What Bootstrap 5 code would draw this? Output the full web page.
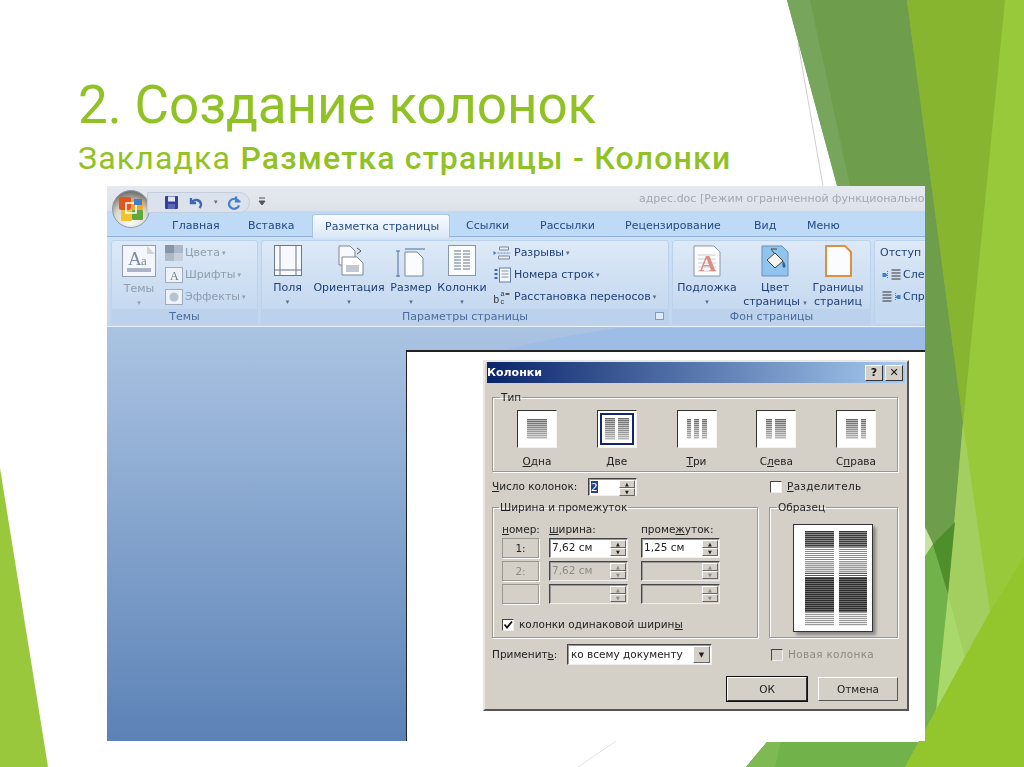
<!DOCTYPE html>
<html lang="ru">
  <head>
    <meta charset="UTF-8" />
    <title>2. Создание колонок</title>
    <link href="https://cdn.jsdelivr.net/npm/bootstrap@5.3.0/dist/css/bootstrap.min.css" rel="stylesheet" />
    <style>
      html, body { margin: 0; background: #fff; }
      .slide { position: relative; width: 1024px; height: 767px; overflow: hidden; background: #fff; }
      .slide-bg { position: absolute; left: 0; top: 0; }
      .slide-head { position: relative; padding: 71px 0 0 78px; color: #90c226; font-family: Roboto, sans-serif; }
      .slide-head h1 { margin: 0; font-size: 53px; line-height: 68px; font-weight: 400; letter-spacing: -.1px; }
      .slide-head p { margin: 0; font-size: 32px; line-height: 39px; letter-spacing: 1.2px; }
      .slide-head strong { font-weight: 500; }

      /* word window */
      .word { position: absolute; left: 107px; top: 186px; width: 818px; height: 555px; overflow: hidden; background: linear-gradient(#c6daf2, #5b82b6); font-family: "DejaVu Sans", sans-serif; font-size: 11px; color: #2a4a80; filter: blur(.35px); }
      .word-title { height: 25px; background: linear-gradient(#e6e9ee, #dde2ea); padding-left: 532px; line-height: 26px; white-space: nowrap; color: #a3a9b2; font-size: 11px; }
      .orb { position: absolute; left: 5px; top: 4px; }
      .qat { position: absolute; left: 40px; top: 6px; width: 103px; height: 21px; border-radius: 0 12px 12px 0; background: #dbe2ec; border: 1px solid #c3cedd; padding-left: 16px; gap: 9px; }
      .tabs { height: 26px; background: #bfdaf7; padding-left: 65px; border-bottom: 1px solid #8fb2dc; white-space: nowrap; }
      .tabs span { line-height: 29px; color: #234a86; position: absolute; }
      .tabs .on { top: 28px; height: 24px; left: 205px; width: 138px; line-height: 24px; padding-left: 12px; background: linear-gradient(#fafcff, #d9e7f7); border: 1px solid #a9c3e4; border-bottom: 0; border-radius: 3px 3px 0 0; z-index: 1; }
      .ribbon { height: 90px; background: linear-gradient(#d0e1f5, #c0d6ef); padding: 3px 0 0 4px; gap: 3px; border-bottom: 1px solid #e8f1fb; }
      .rgroup { height: 85px; flex: none; border-radius: 3px; background: linear-gradient(#dde9f7, #c5d9f0 80%); border: 1px solid #bcd1ea; position: relative; }
      .rgroup-body { height: 68px; padding-top: 4px; }
      .rgroup-foot { height: 16px; line-height: 16px; text-align: center; background: #bcd2ec; color: #4a6b9b; }
      .launcher { position: absolute; right: 4px; bottom: 4px; width: 9px; height: 8px; border: 1px solid #7f9cc4; background: #dfeafa; }
      .bigbtn { flex: none; text-align: center; line-height: 14px; color: #1f3f78; }
      .bigbtn svg { display: block; margin: 0 auto 3px; }
      .bigbtn .lbl { margin-top: 4px; }
      .arw { color: #5b6f8c; font-size: 7px; }
      .rrow { height: 22px; white-space: nowrap; color: #1f3f78; gap: 2px; }
      .rrows { margin-top: -3px; }
      .faded, .faded .arw { color: #8f9dae; }

      .swoosh { position: absolute; left: 0; top: 0; }
      .doc { position: absolute; left: 299px; top: 164px; width: 530px; height: 400px; background: #fff; border-left: 1px solid #222; border-top: 2px solid #222; }

      /* dialog */
      .dlg { position: absolute; left: 483px; top: 360px; width: 426px; height: 351px; background: #d4d0c8; border: 2px solid; border-color: #e8e6e0 #555 #555 #e8e6e0; font-family: "DejaVu Sans", sans-serif; font-size: 10.5px; color: #222; padding: 0 9px 0 7px; filter: blur(.3px); }
      .dlg-title { margin: 0 -7px 0 -5px; height: 21px; line-height: 21px; padding-left: 0; background: linear-gradient(90deg, #0a246a, #a6caf0); color: #fff; font-weight: 700; font-size: 11px; }
      .capbtn { width: 18px; height: 16px; background: #d4d0c8; border: 1px solid; border-color: #fff #333 #333 #fff; color: #111; font-weight: 700; line-height: 14px; text-align: center; font-size: 11px; margin-right: 2px; }
      .etched { border: 1px solid #9a978f; box-shadow: 1px 1px 0 #fff, inset 1px 1px 0 #fff; margin: 0; padding: 0; }
      .etched legend { float: none; width: auto; font-size: 10.5px; line-height: 12px; margin: 0 0 0 7px; padding: 0 1px; }
      .f-type { height: 81px; margin-top: 8px; }
      .thumbs { padding: 7px 21px 0 24px; justify-content: space-between; }
      .thumb-wrap { width: 40px; text-align: center; white-space: nowrap; }
      .thumb-wrap span { display: block; margin: 7px -15px 0; line-height: 13px; }
      .thumb { width: 40px; height: 38px; background: #fff; border: 1px solid; border-color: #333 #f4f4f4 #f4f4f4 #333; padding: 8px 9px; gap: 3px; }
      .thumb.sel { box-shadow: inset 0 0 0 2px #fff, inset 0 0 0 4px #14266b; padding: 7px 7px; }
      .tlines { flex: 1 1 0; background: repeating-linear-gradient(transparent 0 1px, rgba(255,255,255,.5) 1px 2px), linear-gradient(#666, #999 65%, #bbb); }
      .tlines.grow { flex: 2.2 1 0; }
      .spinbox { background: #fff; border: 1px solid; border-color: #444 #eee #eee #444; box-shadow: inset 1px 1px 0 #999; padding-left: 2px; line-height: 17px; white-space: nowrap; position: relative; }
      .spinbox.off { background: #d4d0c8; color: #8d8a83; }
      .spinbtns { position: absolute; right: 1px; top: 1px; bottom: 1px; width: 16px; gap: 0; }
      .spinbtns i { flex: 1; display: block; background: #d4d0c8; border: 1px solid; border-color: #fff #666 #666 #fff; color: #222; font-size: 5px; line-height: 6px; font-style: normal; text-align: center; }
      .off .spinbtns i { color: #8d8a83; }
      .chk { display: block; flex: none; width: 12px; height: 12px; background: #fff; border: 1px solid; border-color: #444 #eee #eee #444; }
      .chk.off { background: #d4d0c8; }
      .f-col { width: 266px; height: 137px; padding: 0 0 0 9px; }
      .f-smp { width: 129px; height: 137px; }
      .num { width: 37px; height: 20px; border: 1px solid #9a978f; box-shadow: 1px 1px 0 #fff; line-height: 18px; text-align: center; }
      .w-sp { width: 79px; height: 20px; }
      .w-gap { width: 79px; height: 20px; }
      .page { width: 80px; height: 108px; margin: 11px 0 0 23px; background: #fff; border: 1px solid #333; box-shadow: 3px 3px 3px #888; padding: 6px 5px 6px 11px; gap: 5px; }
      .plines { width: 30px; }
      .plines b { display: block; }
      .b-a { height: 16px; background: repeating-linear-gradient(#3a3a3a 0 1px, #8a8a8a 1px 2px); }
      .b-b { height: 14px; background: repeating-linear-gradient(#888 0 1px, #fff 1px 2px); }
      .b-f { height: 12px; background: repeating-linear-gradient(#999 0 1px, #d8d8d8 1px 2px); }
      .b-c { height: 5px; background: repeating-linear-gradient(#555 0 1px, #fff 1px 2px); }
      .b-d { height: 34px; background: repeating-linear-gradient(#2a2a2a 0 1px, #6e6e6e 1px 2px); }
      .b-e { height: 14px; background: repeating-linear-gradient(#999 0 1px, #eee 1px 2px); }
      .combo { width: 145px; height: 21px; background: #fff; border: 1px solid; border-color: #444 #eee #eee #444; box-shadow: inset 1px 1px 0 #999; padding-left: 3px; line-height: 19px; position: relative; }
      .combo i { position: absolute; right: 1px; top: 1px; bottom: 1px; width: 17px; background: #d4d0c8; border: 1px solid; border-color: #fff #666 #666 #fff; font-style: normal; font-size: 7px; line-height: 16px; text-align: center; }
      .w2k { width: 80px; height: 24px; background: #d4d0c8; border: 1px solid; border-color: #fff #555 #555 #fff; text-align: center; line-height: 22px; }
      .w2k.def { outline: 1px solid #111; border-color: #fff #333 #333 #fff; }
      .dim { color: #8d8a83; }
      u { text-underline-offset: 1px; }
    </style>
  </head>
  <body>
    <div class="slide">
      <svg class="slide-bg" width="1024" height="767" viewBox="0 0 1024 767">
        <polygon points="907,0 1024,0 1024,767 746,767 767,742 925,742 925,300" fill="#97c93b" />
        <polygon points="907,0 1005,0 963,423" fill="#87b52f" />
        <polygon points="787,0 907,0 963,423 948,594 925,530 868,300" fill="#6e9e4c" />
        <polygon points="787,0 810,0 850,186 837,186" fill="#76a55b" />
        <polygon points="963,423 990,612 965,657 948,594" fill="#a3cf61" />
        <polygon points="948,594 965,657 936,710" fill="#a9d86b" />
        <polygon points="925,556 933,544 948,594 936,710 905,767 746,767 767,742 925,742" fill="#72b24a" />
        <polygon points="767,742 781,742 775,767 746,767" fill="#7fb954" />
        <polygon points="933,544 955,522 948,594" fill="#4f8f2b" />
        <polygon points="925,527 933,544 925,556" fill="#c7e2a3" />
        <polygon points="1024,557 990,612 965,657 936,710 905,767 1024,767" fill="#93c52c" />
        <polygon points="0,468 48,767 0,767" fill="#9ac83d" />
        <line x1="798" y1="43" x2="823" y2="186" stroke="#cfcfcf" />
        <line x1="616" y1="741" x2="578" y2="767" stroke="#e2e2e2" />
      </svg>

      <div class="slide-head">
        <h1>2. Создание колонок</h1>
        <p>Закладка <strong>Разметка страницы - Колонки</strong></p>
      </div>

      <div class="word">
        <div class="word-title">адрес.doc [Режим ограниченной функционально</div>

        <svg class="orb" width="38" height="38" viewBox="0 0 38 38">
          <defs>
            <radialGradient id="orbg" cx=".5" cy=".8" r=".75">
              <stop offset="0" stop-color="#fff" />
              <stop offset=".6" stop-color="#d8d5cc" />
              <stop offset="1" stop-color="#77756f" />
            </radialGradient>
          </defs>
          <circle cx="19" cy="19" r="18.500" fill="url(#orbg)" stroke="#8b9aae" />
          <rect x="7" y="7" width="12" height="13" rx="2" fill="#e2561d" />
          <rect x="19" y="10" width="12" height="10" rx="1" fill="#f0a92a" />
          <rect x="9" y="20" width="11" height="11" rx="1" fill="#f4c22e" />
          <rect x="20" y="20" width="11" height="10" rx="1" fill="#62a83a" />
          <path d="M14 13h10v10h-10z" fill="none" stroke="#fff" stroke-width="1.600" />
          <path d="M22 9h8v6h-8z" fill="#3f7fd0" />
        </svg>

        <div class="qat d-flex align-items-center">
          <svg width="15" height="15" viewBox="0 0 15 15"><rect x="1" y="1" width="13" height="13" rx="1" fill="#34409a" /><rect x="4" y="1.500" width="7" height="5" fill="#dfe6f5" /><rect x="4" y="9" width="7" height="5" fill="#5a66b8" /></svg>
          <svg width="17" height="15" viewBox="0 0 17 15"><path d="M3 3v5h5M3.500 8C6 3.500 12 4 13 9c.3 1.600-.5 3-1.500 4" fill="none" stroke="#3d67b5" stroke-width="2.400" /></svg>
          <span class="arw">▾</span>
          <svg width="15" height="15" viewBox="0 0 15 15"><path d="M9 1.500v5h4.500M12 6.500C10 3 5 2.800 3 6s-.7 6 2 7.300c3 1.200 6-.3 7-3" fill="none" stroke="#3f7ed0" stroke-width="2.200" /></svg>
        </div>
        <svg class="position-absolute" style="left:151px;top:11px" width="8" height="10" viewBox="0 0 8 10"><path d="M1 1h6M1 4h6l-3 4z" fill="#555" stroke="#555" /></svg>

        <div class="tabs">
          <span style="left:65px">Главная</span>
          <span style="left:141px">Вставка</span>
          <span class="on">Разметка страницы</span>
          <span style="left:359px">Ссылки</span>
          <span style="left:433px">Рассылки</span>
          <span style="left:518px">Рецензирование</span>
          <span style="left:647px">Вид</span>
          <span style="left:700px">Меню</span>
        </div>

        <div class="ribbon d-flex">
          <!-- Темы -->
          <section class="rgroup" style="width:147px">
            <div class="rgroup-body d-flex">
              <div class="bigbtn faded" style="width:50px;padding-left:4px">
                <svg width="34" height="33" viewBox="0 0 34 33"><rect x=".5" y=".5" width="33" height="31" fill="#f3f6fa" stroke="#8f9fb0" /><path d="M25 1l8 8h-8z" fill="#cbd5e2" /><rect x="5" y="23" width="24" height="4" fill="#a9b5c6" /><text x="6" y="20" font-family="Liberation Serif, serif" font-size="19" fill="#7d8a9c">A</text><text x="19" y="20" font-family="Liberation Serif, serif" font-size="13" fill="#7d8a9c">a</text></svg>
                <div class="lbl">Темы</div>
                <div class="arw">▾</div>
              </div>
              <div class="faded rrows" style="margin-left:3px">
                <div class="rrow d-flex align-items-center faded"><svg width="18" height="16" viewBox="0 0 18 16"><rect width="18" height="16" fill="#aeb9c8" /><rect width="9" height="8" fill="#8795a8" /><rect x="9" y="8" width="9" height="8" fill="#c6cfdb" /></svg>Цвета <span class="arw">▾</span></div>
                <div class="rrow d-flex align-items-center faded"><svg width="18" height="16" viewBox="0 0 18 16"><rect x=".5" y=".5" width="17" height="15" fill="#eef2f7" stroke="#9eacbd" /><text x="5" y="13" font-family="Liberation Serif, serif" font-size="12" fill="#6c7a8c">A</text></svg>Шрифты <span class="arw">▾</span></div>
                <div class="rrow d-flex align-items-center faded"><svg width="18" height="16" viewBox="0 0 18 16"><rect x=".5" y=".5" width="17" height="15" fill="#eef2f7" stroke="#9eacbd" /><circle cx="9" cy="8" r="4.500" fill="#b8c3d0" /></svg>Эффекты <span class="arw">▾</span></div>
              </div>
            </div>
            <div class="rgroup-foot">Темы</div>
          </section>

          <!-- Параметры страницы -->
          <section class="rgroup" style="width:408px">
            <div class="rgroup-body d-flex">
              <div class="bigbtn" style="width:51px">
                <svg width="28" height="32" viewBox="0 0 28 32"><rect x=".5" y=".5" width="27" height="30" fill="#f7f9fc" stroke="#6b7788" /><path d="M6 0v31M22 0v31M0 25h28" stroke="#6b7788" /></svg>
                <div class="lbl">Поля</div><div class="arw">▾</div>
              </div>
              <div class="bigbtn" style="width:72px">
                <svg width="32" height="32" viewBox="0 0 32 32"><path d="M6 1h11l5 5v14H6z" fill="#f7f9fc" stroke="#7a8799" /><path d="M9 12h15l6 6v12H9z" fill="#fff" stroke="#7a8799" /><rect x="13" y="20" width="13" height="7" fill="#c3c9d2" /><path d="M24 3l4 3-4 3" fill="none" stroke="#555" /></svg>
                <div class="lbl">Ориентация</div><div class="arw">▾</div>
              </div>
              <div class="bigbtn" style="width:46px;margin-left:3px">
                <svg width="30" height="32" viewBox="0 0 30 32"><path d="M9 4h20M2 6v26M0 6h4M0 31h4" stroke="#4f6f96" fill="none" /><path d="M9 7h12l6 6v18H9z" fill="#fbfcfe" stroke="#7a8799" /></svg>
                <div class="lbl">Размер</div><div class="arw">▾</div>
              </div>
              <div class="bigbtn" style="width:50px;margin-left:3px">
                <svg width="28" height="32" viewBox="0 0 28 32"><rect x=".5" y=".5" width="27" height="30" fill="#fbfcfe" stroke="#8a97a8" /><path d="M6 6h16M6 9h16M6 12h16M6 15h16M6 18h16M6 21h16M6 24h16" stroke="#9aa3af" stroke-width="1.500" /><path d="M14 5v21" stroke="#fff" stroke-width="2" /></svg>
                <div class="lbl">Колонки</div><div class="arw">▾</div>
              </div>
              <div class="rrows" style="margin-left:6px">
                <div class="rrow d-flex align-items-center"><svg width="19" height="16" viewBox="0 0 18 16"><path d="M6 2h9v3H6zM5 11h11v3H5z" fill="#e8edf4" stroke="#7a8799" /><path d="M4 8h13" stroke="#7a8799" stroke-dasharray="2 1" /><path d="M0 6l3 2-3 2z" fill="#3d7fc9" /></svg>Разрывы <span class="arw">▾</span></div>
                <div class="rrow d-flex align-items-center"><svg width="19" height="16" viewBox="0 0 18 16"><rect x="6" y="1" width="11" height="14" fill="#f4f7fb" stroke="#5f7fa8" /><path d="M8 4h7M8 7h7M8 10h7" stroke="#8a97a8" /><path d="M1 3h3M1 7h3M1 11h3" stroke="#3a6db0" stroke-width="2" /></svg>Номера строк <span class="arw">▾</span></div>
                <div class="rrow d-flex align-items-center"><svg width="19" height="16" viewBox="0 0 18 16"><text x="0" y="14" font-family="Liberation Sans, sans-serif" font-size="10" fill="#333">b</text><text x="7" y="7" font-family="Liberation Sans, sans-serif" font-size="7" fill="#333">a</text><text x="7" y="15" font-family="Liberation Sans, sans-serif" font-size="7" fill="#333">c</text><path d="M12 5h4" stroke="#333" stroke-width="1.500" /></svg>Расстановка переносов <span class="arw">▾</span></div>
              </div>
            </div>
            <div class="rgroup-foot">Параметры страницы</div>
            <span class="launcher"></span>
          </section>

          <!-- Фон страницы -->
          <section class="rgroup" style="width:199px">
            <div class="rgroup-body d-flex">
              <div class="bigbtn" style="width:68px">
                <svg width="28" height="32" viewBox="0 0 28 32"><path d="M1 1h20l6 6v24H1z" fill="#fbfcfe" stroke="#8a97a8" /><path d="M5 10h18M5 14h18M5 18h18M5 22h18M5 26h18" stroke="#c8ced6" /><text x="6" y="26" font-family="Liberation Serif, serif" font-size="24" font-weight="700" fill="#dd8b84">A</text></svg>
                <div class="lbl">Подложка</div><div class="arw">▾</div>
              </div>
              <div class="bigbtn" style="width:68px">
                <svg width="28" height="32" viewBox="0 0 28 32"><path d="M1 1h20l6 6v24H1z" fill="#8fc4ef" stroke="#6f8fb5" /><path d="M6 15l8-7 8 8-8 7z" fill="#f5f5f0" stroke="#444" /><path d="M13 8l-3-4 6 0" fill="none" stroke="#444" /><path d="M22 16c3 3 3 6 1 7-2-1-2-4-1-7z" fill="#31658f" /></svg>
                <div class="lbl">Цвет<br />страницы <span class="arw">▾</span></div>
              </div>
              <div class="bigbtn" style="width:58px">
                <svg width="28" height="32" viewBox="0 0 28 32"><path d="M2 1h19l6 6v24H2z" fill="#fbfcfe" stroke="#d9923f" stroke-width="2" /></svg>
                <div class="lbl">Границы<br />страниц</div>
              </div>
            </div>
            <div class="rgroup-foot">Фон страницы</div>
          </section>

          <!-- Абзац, обрезан краем окна -->
          <section class="rgroup" style="width:70px">
            <div class="rgroup-body rrows" style="padding-left:5px">
              <div class="rrow d-flex align-items-center">Отступ</div>
              <div class="rrow d-flex align-items-center"><svg style="margin-left:2px" width="19" height="14" viewBox="0 0 18 14"><path d="M9 2h9M9 5h9M9 8h9M9 11h9" stroke="#333" /><path d="M5 3v8" stroke="#777" stroke-dasharray="1 1" /><path d="M0 5h3l2 2-2 2H0z" fill="#3d7fc9" /></svg>Сле</div>
              <div class="rrow d-flex align-items-center"><svg style="margin-left:2px" width="19" height="14" viewBox="0 0 18 14"><path d="M0 2h9M0 5h9M0 8h9M0 11h9" stroke="#333" /><path d="M13 3v8" stroke="#777" stroke-dasharray="1 1" /><path d="M18 5h-3l-2 2 2 2h3z" fill="#3d7fc9" /></svg>Спр</div>
            </div>
          </section>
        </div>

        <svg class="swoosh" width="818" height="170" viewBox="0 0 818 170"><path d="M511 142C470 148 425 156 391 166L818 166V142z" fill="#9dbce6" /></svg>
        <div class="doc"></div>
      </div>

      <div class="dlg">
        <div class="dlg-title d-flex justify-content-between align-items-center">
          <span>Колонки</span>
          <span class="d-flex"><span class="capbtn">?</span><span class="capbtn">✕</span></span>
        </div>

        <fieldset class="etched f-type">
          <legend>Тип</legend>
          <div class="thumbs d-flex">
            <div class="thumb-wrap"><div class="thumb d-flex"><i class="tlines"></i></div><span><u>О</u>дна</span></div>
            <div class="thumb-wrap"><div class="thumb sel d-flex"><i class="tlines"></i><i class="tlines"></i></div><span><u>Д</u>ве</span></div>
            <div class="thumb-wrap"><div class="thumb d-flex"><i class="tlines"></i><i class="tlines"></i><i class="tlines"></i></div><span><u>Т</u>ри</span></div>
            <div class="thumb-wrap"><div class="thumb d-flex"><i class="tlines"></i><i class="tlines grow"></i></div><span>С<u>л</u>ева</span></div>
            <div class="thumb-wrap"><div class="thumb d-flex"><i class="tlines grow"></i><i class="tlines"></i></div><span>С<u>п</u>рава</span></div>
          </div>
        </fieldset>

        <div class="d-flex align-items-center" style="margin-top:6px;height:18px">
          <span style="width:96px"><u>Ч</u>исло колонок:</span>
          <div class="spinbox" style="width:49px;height:18px"><mark class="p-0" style="background:#23418f;color:#fff">2</mark><div class="spinbtns d-flex flex-column"><i>▲</i><i>▼</i></div></div>
          <span class="chk" style="margin-left:133px"></span>
          <span style="margin-left:5px;letter-spacing:.3px"><u>Р</u>азделитель</span>
        </div>

        <div class="d-flex justify-content-between" style="margin-top:5px">
          <fieldset class="etched f-col">
            <legend style="margin-left:-3px">Ширина и промежуток</legend>
            <div class="d-flex" style="margin-top:10px;height:15px;line-height:12px">
              <span style="width:47px"><u>н</u>омер:</span><span style="width:92px"><u>ш</u>ирина:</span><span>проме<u>ж</u>уток:</span>
            </div>
            <div class="d-flex flex-column" style="gap:3px">
              <div class="d-flex"><div class="num">1:</div><div class="spinbox w-sp" style="margin-left:10px">7,62 см<div class="spinbtns d-flex flex-column"><i>▲</i><i>▼</i></div></div><div class="spinbox w-gap" style="margin-left:13px">1,25 см<div class="spinbtns d-flex flex-column"><i>▲</i><i>▼</i></div></div></div>
              <div class="d-flex"><div class="num dim">2:</div><div class="spinbox off w-sp" style="margin-left:10px">7,62 см<div class="spinbtns d-flex flex-column"><i>▲</i><i>▼</i></div></div><div class="spinbox off w-gap" style="margin-left:13px"><div class="spinbtns d-flex flex-column"><i>▲</i><i>▼</i></div></div></div>
              <div class="d-flex"><div class="num"></div><div class="spinbox off w-sp" style="margin-left:10px"><div class="spinbtns d-flex flex-column"><i>▲</i><i>▼</i></div></div><div class="spinbox off w-gap" style="margin-left:13px"><div class="spinbtns d-flex flex-column"><i>▲</i><i>▼</i></div></div></div>
            </div>
            <div class="d-flex align-items-center" style="margin-top:13px">
              <span class="chk d-flex align-items-center justify-content-center">
                <svg width="10" height="10" viewBox="0 0 10 10"><path d="M1.500 4.500l2.500 3 5-6" fill="none" stroke="#111" stroke-width="1.800" /></svg>
              </span>
              <span style="margin-left:5px">колонки одинаковой ширин<u>ы</u></span>
            </div>
          </fieldset>
          <fieldset class="etched f-smp">
            <legend>Образец</legend>
            <div class="page d-flex">
              <div class="plines"><b class="b-a"></b><b class="b-b"></b><b class="b-f"></b><b class="b-c"></b><b class="b-d"></b><b class="b-e"></b></div>
              <div class="plines"><b class="b-a"></b><b class="b-b"></b><b class="b-f"></b><b class="b-c"></b><b class="b-d"></b><b class="b-e"></b></div>
            </div>
          </fieldset>
        </div>

        <div class="d-flex align-items-center" style="margin-top:6px;height:21px">
          <span style="width:75px">Применит<u>ь</u>:</span>
          <div class="combo">ко всему документу<i>▼</i></div>
          <span class="chk off" style="margin-left:59px"></span>
          <span class="dim" style="margin-left:5px;letter-spacing:.3px">Новая колонка</span>
        </div>

        <div class="d-flex justify-content-end" style="margin-top:12px;gap:11px">
          <div class="w2k def">ОК</div>
          <div class="w2k">Отмена</div>
        </div>
      </div>
    </div>
    <script src="https://cdn.jsdelivr.net/npm/bootstrap@5.3.0/dist/js/bootstrap.bundle.min.js"></script>
  </body>
</html>
